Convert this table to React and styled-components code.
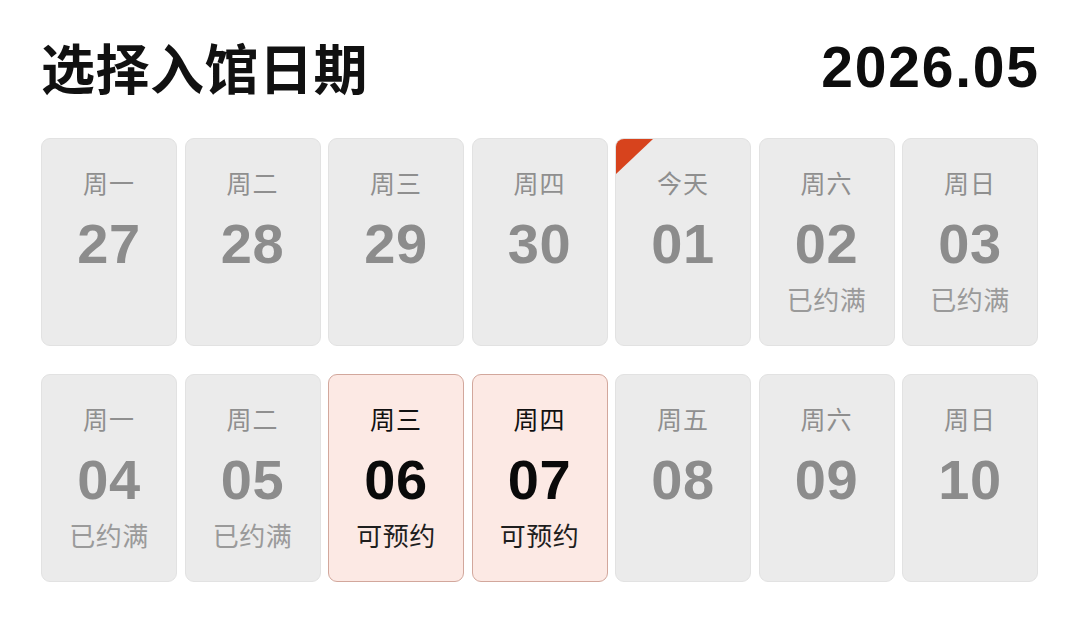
import React from "react";
import styled, { createGlobalStyle, css } from "styled-components";

const Global = createGlobalStyle`
  html, body { margin: 0; padding: 0; background: #ffffff; }
  body { font-family: "Noto Sans CJK SC", "Noto Sans", sans-serif; }
`;

const Page = styled.div`
  width: 1080px;
  height: 623px;
  box-sizing: border-box;
  padding: 36px 42px 0 41px;
`;

const Header = styled.div`
  display: flex;
  align-items: center;
  justify-content: space-between;
  height: 62px;
  margin-bottom: 40px;
`;

const Title = styled.h1`
  margin: 0;
  font-family: "Noto Sans CJK SC", sans-serif;
  font-size: 54px;
  font-weight: 700;
  line-height: 62px;
  color: #111111;
  letter-spacing: 0.5px;
`;

const Month = styled.div`
  font-family: "Liberation Sans", Arial, sans-serif;
  font-size: 57px;
  font-weight: 700;
  line-height: 62px;
  color: #0d0d0d;
  letter-spacing: 1.8px;
  margin-right: -1.8px;
`;

const Grid = styled.div`
  display: grid;
  grid-template-columns: repeat(7, 1fr);
  column-gap: 7.5px;
  row-gap: 28px;
  width: 997px;
`;

const Card = styled.div`
  position: relative;
  overflow: hidden;
  height: 208px;
  box-sizing: border-box;
  border-radius: 9px;
  border: 1px solid #e2e2e2;
  background: #ebebeb;
  display: flex;
  flex-direction: column;
  align-items: center;
  color: #8e8e8e;
  ${(p) =>
    p.$available &&
    css`
      background: #fce9e4;
      border-color: #d2a79c;
      color: #111111;
    `}
  ${(p) =>
    p.$today &&
    css`
      &::before {
        content: "";
        position: absolute;
        left: 0;
        top: 0;
        width: 37px;
        height: 35px;
        background: #d7431d;
        clip-path: polygon(0 0, 100% 0, 0 100%);
      }
    `}
`;

const Weekday = styled.div`
  margin-top: 28px;
  font-size: 25px;
  line-height: 30px;
  font-weight: 400;
  color: ${(p) => (p.$strong ? "#111111" : "#8f8f8f")};
  letter-spacing: 1px;
`;

const Day = styled.div`
  margin-top: 17px;
  font-family: "Liberation Sans", Arial, sans-serif;
  font-size: 56px;
  font-weight: 700;
  line-height: 60px;
  letter-spacing: 0.5px;
  color: ${(p) => (p.$strong ? "#0a0a0a" : "#8c8c8c")};
`;

const Status = styled.div`
  margin-top: 10px;
  font-size: 26px;
  line-height: 30px;
  color: ${(p) => (p.$strong ? "#1e1e1e" : "#9a9a9a")};
  letter-spacing: 0.5px;
`;

const days = [
  { w: "周一", d: "27" },
  { w: "周二", d: "28" },
  { w: "周三", d: "29" },
  { w: "周四", d: "30" },
  { w: "今天", d: "01", today: true },
  { w: "周六", d: "02", s: "已约满" },
  { w: "周日", d: "03", s: "已约满" },
  { w: "周一", d: "04", s: "已约满" },
  { w: "周二", d: "05", s: "已约满" },
  { w: "周三", d: "06", s: "可预约", ok: true },
  { w: "周四", d: "07", s: "可预约", ok: true },
  { w: "周五", d: "08" },
  { w: "周六", d: "09" },
  { w: "周日", d: "10" },
];

export default function App() {
  return (
    <Page>
      <Global />
      <Header>
        <Title>选择入馆日期</Title>
        <Month>2026.05</Month>
      </Header>
      <Grid>
        {days.map((x, i) => (
          <Card key={i} $available={x.ok} $today={x.today}>
            <Weekday $strong={x.ok}>{x.w}</Weekday>
            <Day $strong={x.ok}>{x.d}</Day>
            {x.s && <Status $strong={x.ok}>{x.s}</Status>}
          </Card>
        ))}
      </Grid>
    </Page>
  );
}
